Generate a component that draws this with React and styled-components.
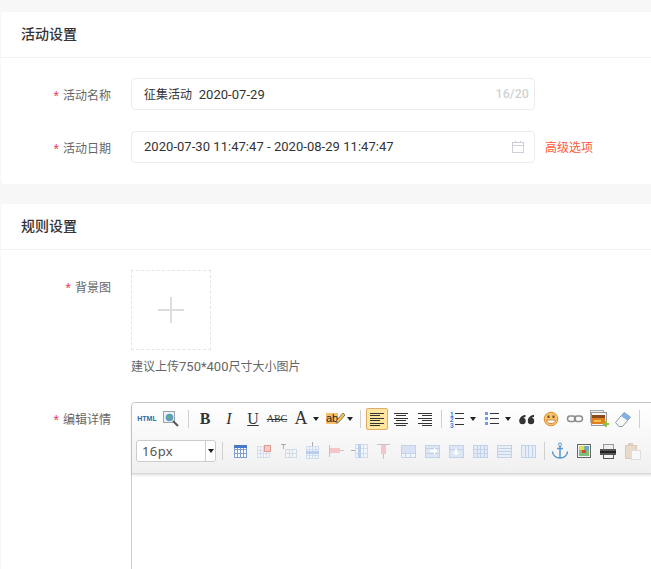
import React from 'react';
import styled, { createGlobalStyle } from 'styled-components';

const Global = createGlobalStyle`
	html, body {
		margin: 0;
		padding: 0;
		height: 569px;
		overflow: hidden;
		background: #f7f7f7;
	}
	* {
		box-sizing: border-box;
	}
`;

const latin = `Roboto, "Noto Sans CJK SC", sans-serif`;
const han = `"Noto Sans CJK SC", sans-serif`;

const Page = styled.div`
	width: 720px;
	padding: 12px 0 0 1px;
	font-family: ${han};
	font-size: 12px;
	color: #666;
`;

const Card = styled.section`
	background: #fff;
	border-radius: 4px;
	margin-bottom: 20px;
`;

const CardHead = styled.h2`
	margin: 0;
	height: 46px;
	padding-left: 20px;
	border-bottom: 1px solid #f2f2f2;
	font-size: 14px;
	line-height: 43px;
	font-weight: 500;
	color: #333;
`;

const CardBody = styled.div`
	display: flex;
	flex-direction: column;
	gap: ${(p) => p.$gap}px;
	padding: 20px 0 21px;
`;

const Row = styled.div`
	display: flex;
	align-items: ${(p) => (p.$top ? 'flex-start' : 'center')};
`;

const Label = styled.label`
	display: flex;
	justify-content: flex-end;
	align-items: center;
	gap: 4px;
	width: 110px;
	height: 32px;
	margin-right: 20px;
	flex: none;
	color: #666;

	&::before {
		content: '*';
		padding-top: 3px;
		color: #e8365d;
		font-family: "Liberation Sans", sans-serif;
		font-size: 14px;
		line-height: 14px;
	}
`;

const InputBox = styled.div`
	width: 404px;
	height: 32px;
	border: 1px solid #ececec;
	border-radius: 4px;
	padding: 0 12px 2px;
	display: flex;
	align-items: center;
	justify-content: space-between;
	font-family: ${latin};
	font-size: 13px;
	letter-spacing: 0.04px;
	color: #333;
`;

const Han = styled.span`
	font-family: ${han};
	font-size: 12px;
`;

const Count = styled.span`
	margin-right: -7px;
	font-family: Roboto, sans-serif;
	font-size: 12.5px;
	font-weight: 500;
	color: #d2d2d2;
`;

const CalendarIcon = styled.svg`
	margin-right: -3px;
	margin-top: 2px;
`;

const MoreLink = styled.a`
	margin-left: 10px;
	padding-bottom: 2px;
	color: #ff5a3c;
`;

const UploadBox = styled.div`
	width: 80px;
	height: 80px;
	border: 1px dashed #e4e4e4;
	display: flex;
	align-items: center;
	justify-content: center;
`;

const Hint = styled.p`
	margin: 7px 0 0;
	height: 17px;
	line-height: 17px;
	font-family: ${latin};
	font-size: 13px;
	color: #666;
`;

const Editor = styled.div`
	width: 600px;
	height: 200px;
	border: 1px solid #ccc;
	border-radius: 4px 4px 0 0;
`;

const Toolbar = styled.div`
	height: 71px;
	background: linear-gradient(to bottom, #ffffff, #f0f0f0);
	border-bottom: 1px solid #d8d8d8;
	box-shadow: 0 1px 3px rgba(0, 0, 0, 0.16);
	border-radius: 4px 4px 0 0;
`;

const ToolRow = styled.div`
	display: flex;
	align-items: center;
	height: ${(p) => p.$h}px;
	padding-left: ${(p) => p.$pad}px;
`;

const Btn = styled.div`
	flex: none;
	width: 24px;
	height: 22px;
	display: flex;
	align-items: center;
	justify-content: center;
	position: relative;
	font-family: "Liberation Serif", serif;
	color: #333;
	${(p) =>
		p.$active &&
		`
		margin: 0 1px 0 2px;
		width: 22px;
		background: #ffe69f;
		border: 1px solid #dcac6c;
		border-radius: 2px;
		`}
`;

const Split = styled.div`
	flex: none;
	display: flex;
	align-items: center;
	width: ${(p) => p.$w}px;
`;

const Caret = styled.i`
	width: 0;
	height: 0;
	margin-left: ${(p) => p.$ml}px;
	border-left: 3.5px solid transparent;
	border-right: 3.5px solid transparent;
	border-top: 4px solid #222;
`;

const Sep = styled.div`
	flex: none;
	width: ${(p) => p.$w || 8}px;
	height: 18px;

	&::after {
		content: '';
		display: block;
		width: 1px;
		height: 18px;
		margin: 0 auto;
		background: #d0d0d0;
	}
`;

const HtmlTag = styled.span`
	font-family: "Liberation Sans", sans-serif;
	font-size: 7px;
	font-weight: 700;
	color: #2a6a9e;
`;

const Glyph = styled.span`
	font-size: ${(p) => p.$size}px;
	font-weight: ${(p) => (p.$bold ? 700 : 400)};
	font-style: ${(p) => (p.$italic ? 'italic' : 'normal')};
	text-decoration: ${(p) => p.$deco || 'none'};
	color: #333;
`;

const Marker = styled.span`
	margin-left: -6px;
	background: #f8bf6a;
	font-family: "Liberation Sans", sans-serif;
	font-size: 11px;
	line-height: 11px;
	color: #222;
`;

const Pencil = styled.svg`
	position: absolute;
	top: 3px;
	right: 1px;
`;

const FontSelect = styled.div`
	flex: none;
	width: 80px;
	height: 22px;
	border: 1px solid #ccc;
	border-radius: 3px;
	background: #fff;
	display: flex;
	align-items: center;
	font-family: "Noto Sans", sans-serif;
	font-size: 13px;
	letter-spacing: 0.4px;
	color: #555;
`;

const SelectText = styled.span`
	flex: 1;
	padding-left: 5px;
`;

const SelectArrow = styled.span`
	width: 10px;
	height: 100%;
	border-left: 1px solid #ccc;
	display: flex;
	align-items: center;
	justify-content: center;
`;

const Svg = ({ children }) => (
	<svg width="20" height="20" viewBox="0 0 20 20" fill="none" shapeRendering="crispEdges">
		{children}
	</svg>
);

const Smooth = ({ children }) => (
	<svg width="20" height="20" viewBox="0 0 20 20" fill="none">
		{children}
	</svg>
);

const Magnifier = () => (
	<Smooth>
		<rect x="2.500" y="2.500" width="11" height="11" fill="#eef1f3" stroke="#9aa3aa" />
		<circle cx="8.500" cy="8.500" r="3.800" fill="#5a9cc8" />
		<path d="M6.500 6.500l3 .5-1 3-2-1zM9.500 10l2-1v2z" fill="#6fb06a" />
		<path d="M12 12l5 5" stroke="#555" strokeWidth="2" />
	</Smooth>
);

const AlignLines = ({ mode }) => {
	const widths = [14, 10, 14, 10, 14, 10];
	return (
		<Svg>
			{widths.map((w, i) => {
				const x = mode === 'left' ? 3 : mode === 'right' ? 17 - w : 10 - w / 2;
				return <rect key={i} x={x} y={4 + i * 2.4} width={w} height="1" fill="#333" />;
			})}
		</Svg>
	);
};

const OrderedList = () => (
	<svg width="20" height="20" viewBox="0 0 20 20" fill="none">
		{[1, 2, 3].map((n, i) => (
			<text key={n} x="3" y={7.5 + i * 5.5} fontFamily="Liberation Sans" fontWeight="700" fontSize="6.500" fill="#3a7be0">
				{n}
			</text>
		))}
		<rect x="8" y="4" width="9" height="1" fill="#333" />
		<rect x="8" y="9" width="9" height="1" fill="#333" />
		<rect x="8" y="15" width="9" height="1" fill="#333" />
	</svg>
);

const BulletList = () => (
	<Svg>
		<rect x="3" y="3" width="3" height="3" fill="#6f9ce8" />
		<rect x="3" y="8" width="3" height="3" fill="#6f9ce8" />
		<rect x="3" y="13" width="3" height="3" fill="#6f9ce8" />
		<rect x="8" y="4" width="9" height="1" fill="#333" />
		<rect x="8" y="9" width="9" height="1" fill="#333" />
		<rect x="8" y="14" width="9" height="1" fill="#333" />
	</Svg>
);

const Quote = () => (
	<Smooth>
		<circle cx="5.500" cy="12" r="3.200" fill="#333" />
		<circle cx="14" cy="12" r="3.200" fill="#333" />
		<path d="M2.500 12C2.500 8.500 5 6 8.500 6v2c-2 0-3 1.500-3 4zM11 12c0-3.500 2.500-6 6-6v2c-2 0-3 1.500-3 4z" fill="#333" />
	</Smooth>
);

const Smile = () => (
	<Smooth>
		<circle cx="10" cy="10" r="6.800" fill="#fbc56e" stroke="#e08a2a" />
		<rect x="6.500" y="6.500" width="2" height="2.500" fill="#7a4a10" />
		<rect x="11.500" y="6.500" width="2" height="2.500" fill="#7a4a10" />
		<path d="M5.500 11h9c-.5 2.500-2.500 3.500-4.500 3.500S6 13.500 5.500 11z" fill="#fff" stroke="#a8641a" strokeWidth=".7" />
	</Smooth>
);

const ChainLink = () => (
	<Smooth>
		<rect x="2.500" y="7" width="8" height="5.500" rx="2.700" stroke="#8c8c8c" strokeWidth="1.500" />
		<rect x="9.500" y="7" width="8" height="5.500" rx="2.700" stroke="#8c8c8c" strokeWidth="1.500" />
	</Smooth>
);

const Picture = () => (
	<Svg>
		<rect x="1" y="1" width="13" height="12" fill="#eee" stroke="#aaa" />
		<rect x="2" y="3" width="15" height="13" fill="#f4f4f4" stroke="#999" />
		<rect x="3" y="6" width="13" height="9" fill="#e07f22" />
		<rect x="3" y="6" width="13" height="3" fill="#8a4a18" />
		<rect x="5" y="11" width="7" height="2" fill="#f5c050" />
		<rect x="14" y="14" width="6" height="2" fill="#8cc63f" />
		<rect x="16" y="12" width="2" height="6" fill="#8cc63f" />
	</Svg>
);

const Eraser = () => (
	<Smooth>
		<path d="M2.500 13.500L11 3.500l6.500 4.500-8 9.500H6z" fill="#f8f8f8" stroke="#8a97a5" />
		<path d="M8 7l3-3.500L17.500 8l-3 3.500z" fill="#7fb2e2" />
	</Smooth>
);

// shared grid of the table buttons, every variant paints on top of it
const TableBase = ({ cols = 4, rows = 3, x = 3, y = 4, w = 14, h = 12, color = '#c3d2e8', fill = '#f2f5fb' }) => (
	<>
		<rect x={x + 0.5} y={y + 0.5} width={w} height={h} fill={fill} stroke={color} />
		{Array.from({ length: cols - 1 }, (_, i) => (
			<rect key={`c${i}`} x={x + Math.round(((i + 1) * w) / cols)} y={y} width="1" height={h} fill={color} />
		))}
		{Array.from({ length: rows - 1 }, (_, i) => (
			<rect key={`r${i}`} x={x} y={y + Math.round(((i + 1) * h) / rows)} width={w} height="1" fill={color} />
		))}
	</>
);

const TableInsert = () => (
	<Svg>
		<TableBase x={4} w={12} color="#7f9fd0" fill="#fafcff" />
		<rect x="4" y="4" width="13" height="3" fill="#4a78c8" />
	</Svg>
);
const TableDelete = () => (
	<Svg>
		<TableBase x={3} w={12} y={5} h={11} color="#d6dde9" />
		<rect x="10" y="4" width="6" height="6" fill="#f6ccc6" stroke="#e09a90" />
	</Svg>
);
const TableTitle = () => (
	<Svg>
		<TableBase x={7} y={8} w={11} h={8} cols={3} rows={2} color="#d2dae4" />
		<rect x="3" y="3" width="5" height="1" fill="#aaa" />
		<rect x="5" y="3" width="1" height="5" fill="#aaa" />
	</Svg>
);
const RowInsert = () => (
	<Svg>
		<TableBase x={4} y={5} w={12} h={12} rows={4} color="#cfdcee" />
		<rect x="4" y="10" width="13" height="3" fill="#b9cdec" />
		<rect x="10" y="1" width="1" height="4" fill="#aaa" />
	</Svg>
);
const RowDelete = () => (
	<Svg>
		<rect x="3" y="4" width="1" height="12" fill="#c4c4c4" />
		<rect x="4" y="7" width="10" height="5" fill="#f4c6ca" />
		<rect x="14" y="9" width="4" height="1" fill="#c4c4c4" />
	</Svg>
);
const ColInsert = () => (
	<Svg>
		<TableBase x={5} y={3} w={12} h={13} cols={3} color="#cfdcee" />
		<rect x="8" y="3" width="3" height="14" fill="#b9cdec" />
		<rect x="1" y="9" width="4" height="1" fill="#aab" />
	</Svg>
);
const ColDelete = () => (
	<Svg>
		<rect x="3" y="3" width="13" height="1" fill="#c4c4c4" />
		<rect x="7" y="4" width="5" height="9" fill="#f4c6ca" />
		<rect x="9" y="13" width="1" height="5" fill="#c4c4c4" />
	</Svg>
);
const CellMerge = () => (
	<Svg>
		<TableBase cols={1} rows={1} color="#c3d2e8" fill="#f2f5fb" />
		<rect x="4" y="5" width="13" height="7" fill="#d8e2f4" />
		<rect x="3" y="12" width="14" height="1" fill="#c3d2e8" />
		<rect x="7" y="12" width="1" height="4" fill="#c3d2e8" />
		<rect x="12" y="12" width="1" height="4" fill="#c3d2e8" />
	</Svg>
);
const CellRight = () => (
	<Svg>
		<TableBase cols={1} rows={1} fill="#dde6f5" />
		<rect x="3" y="7" width="14" height="1" fill="#c3d2e8" />
		<rect x="3" y="12" width="14" height="1" fill="#c3d2e8" />
		<rect x="8" y="9" width="5" height="2" fill="#fff" />
		<path d="M12 7h1v1h1v1h1v2h-1v1h-1v1h-1z" fill="#fff" />
	</Svg>
);
const CellDown = () => (
	<Svg>
		<TableBase cols={1} rows={1} fill="#dde6f5" />
		<rect x="3" y="8" width="14" height="1" fill="#c3d2e8" />
		<rect x="9" y="8" width="2" height="4" fill="#fff" />
		<path d="M7 11h6v1h-1v1h-1v1h-2v-1H8v-1H7z" fill="#fff" />
	</Svg>
);
const CellSplit = () => (
	<Svg>
		<TableBase cols={4} rows={3} fill="#e4eaf6" color="#c3d2e8" />
	</Svg>
);
const RowSplit = () => (
	<Svg>
		<TableBase cols={1} rows={4} fill="#e8eef8" color="#c3d2e8" />
	</Svg>
);
const ColSplit = () => (
	<Svg>
		<TableBase cols={4} rows={1} fill="#e8eef8" color="#c3d2e8" />
	</Svg>
);

const Anchor = () => (
	<Smooth>
		<circle cx="10" cy="3.500" r="1.500" stroke="#5a96cc" />
		<path d="M10 5v12M7 7.500h6M2.500 10.500c0 4 3.500 6.500 7.500 6.500s7.500-2.500 7.500-6.500" stroke="#5a96cc" strokeWidth="1.500" />
	</Smooth>
);

const ImageFrame = () => (
	<Svg>
		<rect x="3" y="3" width="13" height="13" fill="#f4f4f4" stroke="#666" />
		<rect x="5" y="5" width="10" height="10" fill="#7cc07c" />
		<rect x="5" y="5" width="5" height="4" fill="#e8d860" />
		<rect x="11" y="5" width="4" height="4" fill="#6aa8d8" />
		<rect x="8" y="9" width="4" height="3" fill="#d8483a" />
	</Svg>
);

const Printer = () => (
	<Svg>
		<rect x="5" y="3" width="10" height="5" fill="#eee" stroke="#999" />
		<rect x="2" y="8" width="16" height="6" fill="#555" />
		<rect x="2" y="10" width="16" height="2" fill="#222" />
		<rect x="5" y="13" width="10" height="4" fill="#f4f4f4" stroke="#555" />
	</Svg>
);

const Paste = () => (
	<Svg>
		<rect x="3" y="4" width="11" height="13" fill="#e8dacb" stroke="#dbc9b6" />
		<rect x="6" y="2" width="5" height="3" fill="#dccdbd" />
		<rect x="9" y="9" width="9" height="9" fill="#f8f8f8" stroke="#dedede" />
	</Svg>
);

const Plus = () => (
	<svg width="26" height="26" viewBox="0 0 26 26" shapeRendering="crispEdges">
		<rect x="0" y="12" width="26" height="2" fill="#ddd" />
		<rect x="12" y="0" width="2" height="26" fill="#ddd" />
	</svg>
);

const Calendar = () => (
	<CalendarIcon width="14" height="14" viewBox="0 0 14 14" fill="none" shapeRendering="crispEdges">
		<rect x="1.500" y="2.500" width="11" height="10" stroke="#cfcfdc" />
		<rect x="1.500" y="5" width="11" height="1" fill="#cfcfdc" />
		<rect x="4" y="1" width="1" height="2" fill="#cfcfdc" />
		<rect x="9" y="1" width="1" height="2" fill="#cfcfdc" />
	</CalendarIcon>
);

const tableIcons = [
	TableInsert,
	TableDelete,
	TableTitle,
	RowInsert,
	RowDelete,
	ColInsert,
	ColDelete,
	CellMerge,
	CellRight,
	CellDown,
	CellSplit,
	RowSplit,
	ColSplit,
];

const App = () => {
	return (
		<Page>
			<Global />
			<Card>
				<CardHead>活动设置</CardHead>
				<CardBody $gap={21}>
					<Row>
						<Label>活动名称</Label>
						<InputBox>
							<span>
								<Han>征集活动</Han>&nbsp; 2020-07-29
							</span>
							<Count>16/20</Count>
						</InputBox>
					</Row>
					<Row>
						<Label>活动日期</Label>
						<InputBox>
							<span>2020-07-30 11:47:47 - 2020-08-29 11:47:47</span>
							<Calendar />
						</InputBox>
						<MoreLink>高级选项</MoreLink>
					</Row>
				</CardBody>
			</Card>
			<Card>
				<CardHead>规则设置</CardHead>
				<CardBody $gap={28}>
					<Row $top>
						<Label>背景图</Label>
						<div>
							<UploadBox>
								<Plus />
							</UploadBox>
							<Hint>
								<Han>建议上传</Han>750*400<Han>尺寸大小图片</Han>
							</Hint>
						</div>
					</Row>
					<Row $top>
						<Label>编辑详情</Label>
						<Editor>
							<Toolbar>
								<ToolRow $h={31} $pad={3}>
									<Btn>
										<HtmlTag>HTML</HtmlTag>
									</Btn>
									<Btn>
										<Magnifier />
									</Btn>
									<Sep $w={10} />
									<Btn>
										<Glyph $size={16} $bold>B</Glyph>
									</Btn>
									<Btn>
										<Glyph $size={16} $italic>I</Glyph>
									</Btn>
									<Btn>
										<Glyph $size={16} $deco="underline">U</Glyph>
									</Btn>
									<Btn>
										<Glyph $size={10} $deco="line-through">ABC</Glyph>
									</Btn>
									<Split $w={34}>
										<Btn>
											<Glyph $size={18}>A</Glyph>
										</Btn>
										<Caret $ml={0} />
									</Split>
									<Split $w={33}>
										<Btn>
											<Marker>ab</Marker>
											<Pencil width="12" height="14" viewBox="0 0 12 14">
												<path d="M2 12l1-3 6-7 2 2-6 7z" fill="#f5c24a" stroke="#555" strokeWidth=".7" />
											</Pencil>
										</Btn>
										<Caret $ml={0} />
									</Split>
									<Sep />
									<Btn $active>
										<AlignLines mode="left" />
									</Btn>
									<Btn>
										<AlignLines mode="center" />
									</Btn>
									<Btn>
										<AlignLines mode="right" />
									</Btn>
									<Sep />
									<Split $w={35}>
										<Btn>
											<OrderedList />
										</Btn>
										<Caret $ml={1} />
									</Split>
									<Split $w={35}>
										<Btn>
											<BulletList />
										</Btn>
										<Caret $ml={1} />
									</Split>
									<Btn>
										<Quote />
									</Btn>
									<Btn>
										<Smile />
									</Btn>
									<Btn>
										<ChainLink />
									</Btn>
									<Btn>
										<Picture />
									</Btn>
									<Btn>
										<Eraser />
									</Btn>
									<Sep />
								</ToolRow>
								<ToolRow $h={33} $pad={4}>
									<FontSelect>
										<SelectText>16px</SelectText>
										<SelectArrow>
											<Caret $ml={0} />
										</SelectArrow>
									</FontSelect>
									<Sep $w={12} />
									{tableIcons.map((Icon, i) => (
										<Btn key={i}>
											<Icon />
										</Btn>
									))}
									<Sep />
									<Btn>
										<Anchor />
									</Btn>
									<Btn>
										<ImageFrame />
									</Btn>
									<Btn>
										<Printer />
									</Btn>
									<Btn>
										<Paste />
									</Btn>
								</ToolRow>
							</Toolbar>
						</Editor>
					</Row>
				</CardBody>
			</Card>
		</Page>
	);
};

export default App;
